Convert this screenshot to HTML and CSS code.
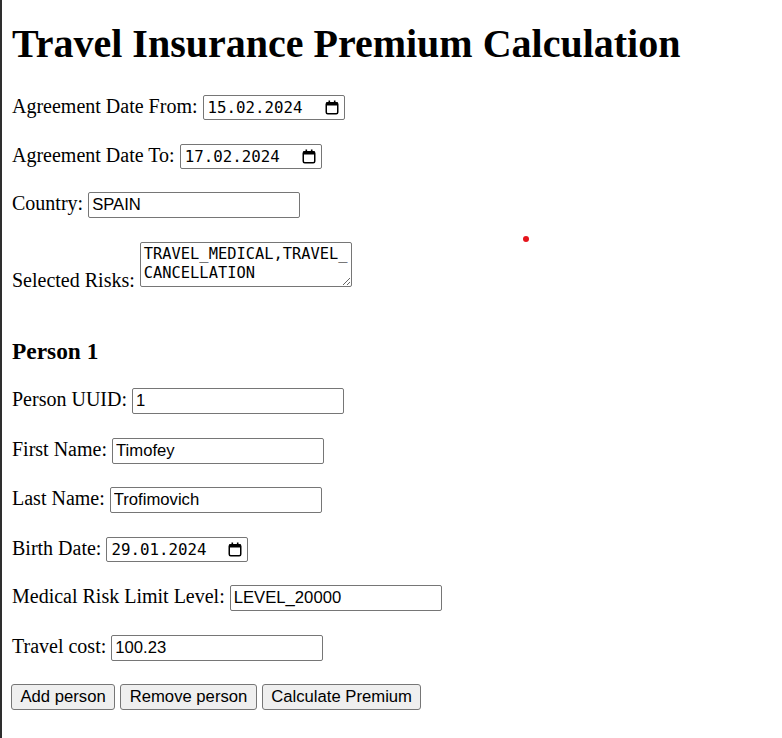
FILE: index.html
```html
<!DOCTYPE html>
<html lang="en">
<head>
<meta charset="utf-8">
<title>Travel Insurance Premium Calculation</title>
<link rel="stylesheet" href="styles.css">
</head>
<body>
<span class="dot"></span>
<h1 class="title">Travel Insurance Premium Calculation</h1>
<form class="form">
  <p class="row"><label>Agreement Date From:</label> <span class="date"><span class="date-text">15.02.2024</span><svg class="cal" width="14" height="15" viewBox="0 0 14 15"><rect x="1.25" y="2.75" width="11.5" height="11" rx="1.5" fill="none" stroke="#000" stroke-width="1.5"/><rect x="1" y="2.5" width="12" height="3" fill="#000"/><rect x="3.5" y="0.5" width="1.6" height="2.5" fill="#000"/><rect x="8.9" y="0.5" width="1.6" height="2.5" fill="#000"/></svg></span></p>
  <p class="row"><label>Agreement Date To:</label> <span class="date"><span class="date-text">17.02.2024</span><svg class="cal" width="14" height="15" viewBox="0 0 14 15"><rect x="1.25" y="2.75" width="11.5" height="11" rx="1.5" fill="none" stroke="#000" stroke-width="1.5"/><rect x="1" y="2.5" width="12" height="3" fill="#000"/><rect x="3.5" y="0.5" width="1.6" height="2.5" fill="#000"/><rect x="8.9" y="0.5" width="1.6" height="2.5" fill="#000"/></svg></span></p>
  <p class="row"><label>Country:</label> <input class="field" type="text" value="SPAIN"></p>
  <p class="row"><label>Selected Risks:</label> <textarea class="risks">TRAVEL_MEDICAL,TRAVEL_CANCELLATION</textarea></p>
  <h3 class="person">Person 1</h3>
  <p class="row"><label>Person UUID:</label> <input class="field" type="text" value="1"></p>
  <p class="row"><label>First Name:</label> <input class="field" type="text" value="Timofey"></p>
  <p class="row"><label>Last Name:</label> <input class="field" type="text" value="Trofimovich"></p>
  <p class="row"><label>Birth Date:</label> <span class="date"><span class="date-text">29.01.2024</span><svg class="cal" width="14" height="15" viewBox="0 0 14 15"><rect x="1.25" y="2.75" width="11.5" height="11" rx="1.5" fill="none" stroke="#000" stroke-width="1.5"/><rect x="1" y="2.5" width="12" height="3" fill="#000"/><rect x="3.5" y="0.5" width="1.6" height="2.5" fill="#000"/><rect x="8.9" y="0.5" width="1.6" height="2.5" fill="#000"/></svg></span></p>
  <p class="row"><label>Medical Risk Limit Level:</label> <input class="field" type="text" value="LEVEL_20000"></p>
  <p class="row"><label>Travel cost:</label> <input class="field" type="text" value="100.23"></p>
  <p class="row row-buttons"><button type="button" class="btn">Add person</button> <button type="button" class="btn">Remove person</button> <button type="button" class="btn">Calculate Premium</button></p>
</form>
</body>
</html>
```
FILE: styles.css
```css
html {
  border-left: 2px solid #2e2e2e;
  min-height: 100%;
  box-sizing: border-box;
}
body {
  margin: 0 10px 10px 9px;
  padding-top: 1px;
  font-family: "Liberation Serif", "Times New Roman", serif;
  font-size: 20px;
  color: #000;
  background: #fff;
  position: relative;
  min-height: 737px;
}
.dot {
  position: absolute;
  left: 512px;
  top: 236px;
  width: 6px;
  height: 6px;
  border-radius: 50%;
  background: #e5141c;
}
.title {
  font-size: 40px;
  font-weight: bold;
  margin: 19px 0 0 1px;
}
.form {
  margin: 0;
  padding-top: 4.5px;
}
.row {
  margin: 23.5px 0 23.5px 1px;
}
.person {
  font-size: 23.4px;
  font-weight: bold;
  margin: 46px 0 0 1px;
}
.row-buttons {
  margin-left: 0;
}
.field {
  font-family: "Liberation Sans", Arial, sans-serif;
  font-size: 16.67px;
  width: 212px;
  height: 26px;
  box-sizing: border-box;
  padding: 1px 3px;
  border: 1px solid #767676;
  border-radius: 2px;
  color: #000;
  background: #fff;
  margin: 0;
}
.date {
  display: inline-flex;
  align-items: center;
  justify-content: space-between;
  width: 142px;
  height: 25px;
  box-sizing: border-box;
  border: 1px solid #767676;
  border-radius: 2px;
  padding: 0 5px 0 4px;
  vertical-align: baseline;
}
.date-text {
  font-family: "DejaVu Sans Mono", monospace;
  font-size: 15.8px;
  color: #000;
}
.cal {
  display: block;
}
.risks {
  font-family: "DejaVu Sans Mono", monospace;
  font-size: 15.4px;
  line-height: 19px;
  width: 212px;
  height: 45px;
  box-sizing: border-box;
  padding: 2px 1px 2px 3px;
  border: 1px solid #767676;
  border-radius: 2px;
  margin: 0;
  vertical-align: baseline;
  resize: both;
  overflow: hidden;
  word-break: break-all;
  color: #000;
}
.btn {
  font-family: "Liberation Sans", Arial, sans-serif;
  font-size: 16.67px;
  height: 26px;
  padding: 0 8.5px;
  border: 1px solid #767676;
  border-radius: 3px;
  background: #efefef;
  color: #000;
  margin: 0;
}
```
